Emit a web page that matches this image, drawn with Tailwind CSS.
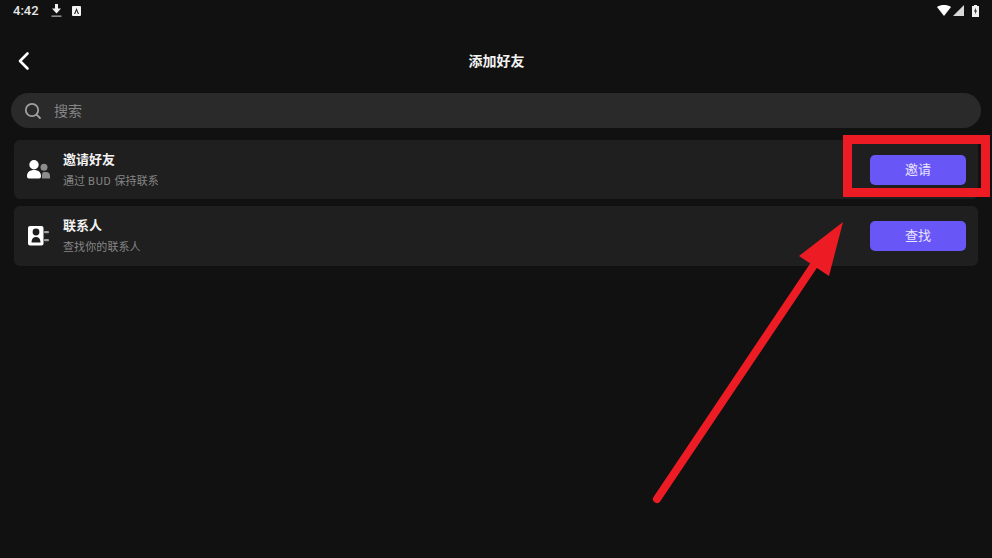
<!DOCTYPE html>
<html lang="zh-CN">
<head>
    <meta charset="UTF-8">
    <meta name="viewport" content="width=device-width, initial-scale=1.0">
    <title>添加好友</title>
    <script src="https://cdn.jsdelivr.net/npm/@tailwindcss/browser@4"></script>
</head>
<body class="bg-[#111111] overflow-hidden font-['Roboto','Noto_Sans_CJK_SC',sans-serif]">
    <div class="relative w-[992px] h-[558px] flex flex-col">
        <!-- Status bar -->
        <div class="h-[21px] flex items-center pl-[13px] pr-[13px] text-[#e6e6e6]">
            <span class="text-[13px] font-medium leading-none w-[26px]">4:42</span>
            <svg class="ml-[12px] w-[11px] h-[14px]" viewBox="0 0 11 14">
                <path d="M4 0h3v4.500h3L5.500 9.500 1 4.500h3z" fill="#f0f0f0"/>
                <rect x="0.500" y="11.500" width="10" height="1.300" fill="#a8a8a8"/>
            </svg>
            <svg class="ml-[10px] w-[9px] h-[10px]" viewBox="0 0 9 10">
                <rect width="9" height="10" rx="1" fill="#f4f4f4"/>
                <path d="M4.500 2 7 8H5.800L4.500 4.800 3.200 8H2z" fill="#222"/>
            </svg>
            <div class="ml-auto flex items-center">
                <svg class="w-[14px] h-[11px]" viewBox="0 0 14 11"><path d="M0 2C4-.6 10-.6 14 2L7 11z" fill="#fff"/></svg>
                <svg class="ml-[2px] w-[11px] h-[11px]" viewBox="0 0 11 11"><path d="M11 0V11H0z" fill="#d8d8d8"/></svg>
                <svg class="ml-[8px] w-[7px] h-[12px]" viewBox="0 0 7 12">
                    <path d="M2 0h3v1h2v11H0V1h2z" fill="#f2f2f2"/>
                    <path d="M4 2.500 2 6.500h1.300L3 9.500l2-4H3.700z" fill="#222"/>
                </svg>
            </div>
        </div>

        <!-- Title bar -->
        <div class="relative h-[72px] pt-[8px] pl-[1px] flex items-center justify-center">
            <svg class="absolute left-[17px] top-[30px] w-[13px] h-[20px]" viewBox="0 0 13 20" fill="none">
                <path d="M10.500 2.500 3 10l7.500 7.500" stroke="#fff" stroke-width="2.600" stroke-linecap="round" stroke-linejoin="round"/>
            </svg>
            <h1 class="text-[14px] font-bold text-[#f2f2f2] leading-none">添加好友</h1>
        </div>

        <!-- Search -->
        <div class="mx-[11px] h-[35px] rounded-full bg-[#2a2a2a] flex items-center pl-[13px]">
            <svg class="w-[18px] h-[18px]" viewBox="0 0 18 18" fill="none">
                <circle cx="8" cy="8" r="6.200" stroke="#a0a0a0" stroke-width="1.800"/>
                <path d="m12.800 12.800 3.200 3.200" stroke="#a0a0a0" stroke-width="1.800" stroke-linecap="round"/>
            </svg>
            <span class="ml-[12px] text-[14px] text-[#858585] leading-none">搜索</span>
        </div>

        <!-- Rows -->
        <div class="mx-[14px] mt-[12px] flex flex-col gap-[7px]">
            <div class="h-[59px] rounded-[6px] bg-[#1f1f1f] flex items-center pl-[13px] pr-[12px]">
                <svg class="w-[23px] h-[20px]" viewBox="0 0 23 20">
                    <circle cx="17" cy="7.300" r="3.500" fill="#8c8c8c"/>
                    <path d="M15 18.500v-3.500c0-2 1-3 2-3h2c2.500 0 4 1.500 4 4v2.500z" fill="#8c8c8c"/>
                    <circle cx="7" cy="4.800" r="4.700" fill="#fff"/>
                    <path d="M0 16c0-4 3-6 7-6s7 2 7 6c0 1.700-.7 2.500-2 2.500H2c-1.300 0-2-.8-2-2.500z" fill="#fff"/>
                </svg>
                <div class="ml-[13px] flex flex-col">
                    <span class="text-[13px] font-bold text-[#f2f2f2] leading-[18px]">邀请好友</span>
                    <span class="mt-[5px] text-[11px] text-[#858585] leading-[15px] tracking-[0.100px]">通过 <span class="tracking-[0.800px]">BUD</span> 保持联系</span>
                </div>
                <button class="ml-auto w-[96px] h-[30px] rounded-[5px] bg-[#6856f6] text-[13px] text-[#e8e4ff]">邀请</button>
            </div>
            <div class="h-[60px] rounded-[6px] bg-[#1f1f1f] flex items-center pl-[14px] pr-[12px]">
                <svg class="w-[22px] h-[22px]" viewBox="0 0 22 22">
                    <rect x="0" y="1" width="15.500" height="19.500" rx="2" fill="#fff"/>
                    <circle cx="8" cy="7" r="3.400" fill="#1f1f1f"/>
                    <path d="M3.500 17.500c0-3.700 2-5.500 4.500-5.500s4.500 1.800 4.500 5.500z" fill="#1f1f1f"/>
                    <rect x="16" y="6" width="5" height="2.300" rx="1" fill="#a0a0a0"/>
                    <rect x="16" y="14" width="5" height="2.300" rx="1" fill="#a0a0a0"/>
                </svg>
                <div class="ml-[13px] flex flex-col">
                    <span class="text-[13px] font-bold text-[#f2f2f2] leading-[18px]">联系人</span>
                    <span class="mt-[5px] text-[11px] text-[#858585] leading-[15px] tracking-[0.100px]">查找你的联系人</span>
                </div>
                <button class="ml-auto w-[96px] h-[30px] rounded-[5px] bg-[#6856f6] text-[13px] text-[#e8e4ff]">查找</button>
            </div>
        </div>

        <!-- Annotation drawn over the screenshot -->
        <div class="absolute left-[843px] top-[135px] w-[147px] h-[62px] border-solid border-[#ed1c24] border-t-[9px] border-b-[9px] border-l-[9px] border-r-[9px]"></div>
        <svg class="absolute left-0 top-0 w-[992px] h-[558px] pointer-events-none" viewBox="0 0 992 558" fill="none">
            <path d="M657 499 814 265" stroke="#ed1c24" stroke-width="8" stroke-linecap="round"/>
            <path d="M843 222 799 256 829 276z" fill="#ed1c24"/>
        </svg>
    </div>
</body>
</html>
